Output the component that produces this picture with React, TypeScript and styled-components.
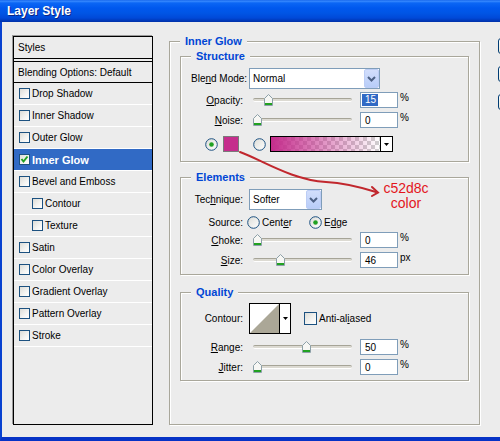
import styled, { createGlobalStyle } from 'styled-components';

const GlobalStyle = createGlobalStyle`
  html, body {
    margin: 0;
    padding: 0;
    overflow: hidden;
    background: #ececec;
  }
  body {
    font-family: 'Liberation Sans', Arial, sans-serif;
    font-size: 10px;
    color: #000;
  }
`;

const Window = styled.div`
  position: relative;
  width: 500px;
  height: 441px;
  overflow: hidden;
  display: flex;
  flex-direction: column;
  background: #ececec;
`;

const TitleBar = styled.div`
  flex: 0 0 22px;
  display: flex;
  align-items: center;
  padding-left: 7px;
  background: linear-gradient(
    #0a5ae6 0px,
    #3b8cff 1px,
    #0b66f5 3px,
    #0058ee 8px,
    #0055e5 13px,
    #0049d8 18px,
    #0036b4 21px,
    #0031a8 22px
  );
  color: #fff;
  font: bold 12px 'Liberation Sans', Arial, sans-serif;
  text-shadow: 1px 1px 0 #0c2483;
`;

const Body = styled.div`
  flex: 1;
  display: flex;
  align-items: flex-start;
  padding: 12px 0 0 10px;
  border-left: 2px solid #0841d0;
  border-bottom: 4px solid #0733c6;
  min-width: 0;
`;

/* ---------- style list on the left ---------- */

const Sidebar = styled.div`
  flex: 0 0 140px;
  box-sizing: border-box;
  height: 389px;
  margin: 2px 0 0 1px;
  border: 1px solid #000;
  box-shadow: -1px -1px 0 #9a9a9a;
  background: #ececec;
`;

const SideHeader = styled.div`
  height: 21px;
  display: flex;
  align-items: center;
  padding-left: 4px;
  border-bottom: 1px solid #000;
`;

const BlendRow = styled.div`
  height: 20px;
  margin-top: 2px;
  display: flex;
  align-items: center;
  padding-left: 4px;
  border-top: 1px solid #000;
  border-bottom: 1px solid #000;
`;

const SideItem = styled.div<{ $selected?: boolean; $indent?: boolean }>`
  height: 21px;
  display: flex;
  align-items: center;
  gap: 2px;
  padding-left: ${(p) => (p.$indent ? 18 : 5)}px;
  border-bottom: 1px solid #fff;
  background: ${(p) => (p.$selected ? '#316ac5' : 'transparent')};
  color: ${(p) => (p.$selected ? '#fff' : '#000')};
  font-weight: ${(p) => (p.$selected ? 'bold' : 'normal')};
  font-size: ${(p) => (p.$selected ? 11 : 10)}px;
`;

const Check = styled.span<{ $size: number }>`
  flex: 0 0 auto;
  box-sizing: border-box;
  width: ${(p) => p.$size}px;
  height: ${(p) => p.$size}px;
  display: inline-flex;
  align-items: center;
  justify-content: center;
  border: 1px solid #1c5180;
  background: linear-gradient(135deg, #dcdcd7 0%, #f4f4f2 60%, #ffffff 100%);
`;

/* ---------- settings panel ---------- */

const Group = styled.fieldset<{ $pt: number; $pb: number; $px: number; $mt?: number }>`
  flex: 0 0 auto;
  box-sizing: border-box;
  margin: ${(p) => p.$mt ?? 0}px 0 0;
  padding: ${(p) => p.$pt}px ${(p) => p.$px}px ${(p) => p.$pb}px;
  border: 1px solid #a9a79b;
  box-shadow: 1px 1px 0 #fff, inset 1px 1px 0 #fff;
  min-width: 0;
`;

const Legend = styled.legend`
  padding: 0 5px;
  font: bold 11px/14px 'Liberation Sans', Arial, sans-serif;
  color: #0046d5;
  background: #ececec;
`;

const Main = styled(Group)`
  width: 311px;
  flex: 0 0 311px;
  margin-left: 16px;
`;

const Row = styled.div<{ $h: number; $mt?: number }>`
  display: grid;
  grid-template-columns: 52px 1fr;
  column-gap: 6px;
  align-items: center;
  height: ${(p) => p.$h}px;
  margin-top: ${(p) => p.$mt ?? 0}px;
`;

const Label = styled.span`
  text-align: right;
  white-space: nowrap;
`;

const Controls = styled.div<{ $shift?: number }>`
  display: flex;
  align-items: center;
  height: 100%;
  margin-left: ${(p) => p.$shift ?? 0}px;
  white-space: nowrap;
`;

const Select = styled.div<{ $w: number }>`
  box-sizing: border-box;
  width: ${(p) => p.$w}px;
  height: 21px;
  display: flex;
  align-items: center;
  justify-content: space-between;
  padding: 0 0 0 3px;
  border: 1px solid #7f9db9;
  background: #fff;
`;

const SelectButton = styled.span`
  box-sizing: border-box;
  width: 15px;
  height: 19px;
  display: flex;
  align-items: center;
  justify-content: center;
  border: 1px solid #bccdf5;
  border-radius: 2px;
  background: linear-gradient(#d2defc, #b8cdf8);
`;

const Slider = styled.div`
  position: relative;
  flex: 0 0 99px;
  height: 16px;
  margin-left: 4px;
  display: flex;
  align-items: center;
`;

const Groove = styled.div`
  box-sizing: border-box;
  width: 100%;
  height: 4px;
  border-radius: 2px;
  border-top: 1px solid #a6a497;
  border-bottom: 1px solid #fff;
  background: #dcdad2;
`;

const Thumb = styled.svg<{ $pos: number }>`
  position: absolute;
  top: 2px;
  left: ${(p) => p.$pos}px;
`;

const NumberBox = styled.div`
  box-sizing: border-box;
  flex: 0 0 38px;
  height: 16px;
  margin-left: 8px;
  display: flex;
  align-items: center;
  padding-left: 4px;
  border: 1px solid #7f9db9;
  background: #fff;
`;

const Selected = styled.span`
  margin-left: -3px;
  padding: 0 2px 0 3px;
  line-height: 12px;
  background: #316ac5;
  color: #fff;
`;

const Unit = styled.span`
  margin-left: 2px;
  align-self: flex-start;
`;

const ColorRow = styled.div`
  display: flex;
  align-items: center;
  height: 16px;
  margin-top: 8px;
  padding-left: 14px;
`;

const Swatch = styled.div<{ $color: string }>`
  box-sizing: border-box;
  width: 16px;
  height: 16px;
  margin: 0 14px 0 5px;
  border: 1px solid #7a7a7a;
  background: ${(p) => p.$color};
`;

const GradientBox = styled.div`
  box-sizing: border-box;
  width: 123px;
  height: 16px;
  margin-left: 4px;
  display: flex;
  border: 1px solid #000;
  background: #fff;
`;

const GradientPreview = styled.div<{ $color: string }>`
  flex: 1;
  background:
    linear-gradient(to right, ${(p) => p.$color}, rgba(197, 45, 140, 0)),
    repeating-conic-gradient(#cfcfcf 0% 25%, #ffffff 0% 50%) 0 0 / 8px 8px;
`;

const DropArrow = styled.div<{ $divider?: boolean }>`
  flex: ${(p) => (p.$divider ? '0 0 11px' : '1')};
  display: flex;
  align-items: center;
  justify-content: center;
  border-left: ${(p) => (p.$divider ? '1px solid #000' : 'none')};
  background: #fff;
`;

const RadioText = styled.span<{ $gap: number }>`
  margin: 0 ${(p) => p.$gap}px 0 2px;
`;

const ContourBox = styled.div`
  box-sizing: border-box;
  width: 42px;
  height: 31px;
  display: flex;
  border: 1px solid #000;
  background: #fff;
`;

const ContourPreview = styled.svg`
  flex: 0 0 29px;
  border-right: 1px solid #000;
`;

const AntiAlias = styled.label`
  display: flex;
  align-items: center;
  gap: 2px;
  margin-left: 13px;
`;

/* ---------- dialog buttons, cut off at the right edge ---------- */

const ButtonColumn = styled.div`
  flex: 0 0 80px;
  display: flex;
  flex-direction: column;
  gap: 12px;
  margin: 4px 0 0 18px;
`;

const DialogButton = styled.div`
  box-sizing: border-box;
  height: 16px;
  border: 1px solid #003c74;
  border-radius: 3px;
  background: linear-gradient(#ffffff, #ece9d8);
`;

/* ---------- red note drawn on top ---------- */

const Overlay = styled.svg`
  position: absolute;
  left: 0;
  top: 0;
  pointer-events: none;
`;

const Note = styled.div`
  position: absolute;
  left: 382px;
  top: 181px;
  width: 48px;
  text-align: center;
  font: 14px/15px 'Liberation Sans', Arial, sans-serif;
  color: #e3161d;
`;

function Chevron() {
  return (
    <svg width="9" height="6" viewBox="0 0 9 6">
      <path d="M1 1 L4.5 4.5 L8 1" fill="none" stroke="#4d6185" strokeWidth="2" />
    </svg>
  );
}

function TickMark({ color }: { color: string }) {
  return (
    <svg width="9" height="9" viewBox="0 0 9 9">
      <path d="M1.5 4 L3.5 6.5 L7.5 1.5" fill="none" stroke={color} strokeWidth="2" />
    </svg>
  );
}

function Radio({ on }: { on?: boolean }) {
  return (
    <svg width="13" height="13" viewBox="0 0 13 13" style={{ flex: '0 0 13px' }}>
      <defs>
        <linearGradient id="radioFill" x1="0" y1="0" x2="1" y2="1">
          <stop offset="0" stopColor="#dcdcd7" />
          <stop offset="1" stopColor="#ffffff" />
        </linearGradient>
      </defs>
      <circle cx="6.5" cy="6.5" r="5.8" fill="url(#radioFill)" stroke="#1c5180" strokeWidth="1" />
      {on && <circle cx="6.5" cy="6.5" r="2.3" fill="#21a121" />}
    </svg>
  );
}

function SliderThumb({ pos }: { pos: number }) {
  return (
    <Thumb $pos={pos} width="9" height="12" viewBox="0 0 9 12">
      <path d="M0.5 4.5 L4.5 0.5 L8.5 4.5 V11.5 H0.5 Z" fill="#f7f7f4" stroke="#8da0a8" />
      <rect x="1" y="9" width="7" height="2" fill="#21a121" />
    </Thumb>
  );
}

function SmallArrow() {
  return (
    <svg width="5" height="3" viewBox="0 0 5 3">
      <path d="M0 0 H5 L2.5 3 Z" fill="#000" />
    </svg>
  );
}

interface SliderRowProps {
  label: React.ReactNode;
  value: string;
  unit: string;
  pos: number;
  mt: number;
  selected?: boolean;
}

function SliderRow({ label, value, unit, pos, mt, selected }: SliderRowProps) {
  return (
    <Row $h={16} $mt={mt}>
      <Label>{label}</Label>
      <Controls>
        <Slider>
          <Groove />
          <SliderThumb pos={pos} />
        </Slider>
        <NumberBox>{selected ? <Selected>{value}</Selected> : value}</NumberBox>
        <Unit>{unit}</Unit>
      </Controls>
    </Row>
  );
}

const styleItems = [
  { label: 'Drop Shadow' },
  { label: 'Inner Shadow' },
  { label: 'Outer Glow' },
  { label: 'Inner Glow', checked: true, selected: true },
  { label: 'Bevel and Emboss' },
  { label: 'Contour', indent: true },
  { label: 'Texture', indent: true },
  { label: 'Satin' },
  { label: 'Color Overlay' },
  { label: 'Gradient Overlay' },
  { label: 'Pattern Overlay' },
  { label: 'Stroke' },
];

const glowColor = '#c52d8c';

export default function App() {
  return (
    <Window>
      <GlobalStyle />
      <TitleBar>Layer Style</TitleBar>
      <Body>
        <Sidebar>
          <SideHeader>Styles</SideHeader>
          <BlendRow>Blending Options: Default</BlendRow>
          {styleItems.map((item) => (
            <SideItem key={item.label} $selected={item.selected} $indent={item.indent}>
              <Check $size={11}>{item.checked && <TickMark color="#21a121" />}</Check>
              {item.label}
            </SideItem>
          ))}
        </Sidebar>

        <Main $pt={1} $pb={43} $px={10}>
          <Legend>Inner Glow</Legend>

          <Group $pt={5} $pb={9} $px={10}>
            <Legend>Structure</Legend>
            <Row $h={21}>
              <Label>
                Ble<u>n</u>d Mode:
              </Label>
              <Controls>
                <Select $w={131}>
                  Normal
                  <SelectButton>
                    <Chevron />
                  </SelectButton>
                </Select>
              </Controls>
            </Row>
            <SliderRow label={<><u>O</u>pacity:</>} value="15" unit="%" pos={11} mt={3} selected />
            <SliderRow label={<><u>N</u>oise:</>} value="0" unit="%" pos={0} mt={4} />
            <ColorRow>
              <Radio on />
              <Swatch $color={glowColor} />
              <Radio />
              <GradientBox>
                <GradientPreview $color={glowColor} />
                <DropArrow $divider>
                  <SmallArrow />
                </DropArrow>
              </GradientBox>
            </ColorRow>
          </Group>

          <Group $pt={5} $pb={6} $px={10} $mt={8}>
            <Legend>Elements</Legend>
            <Row $h={21}>
              <Label>
                Tec<u>h</u>nique:
              </Label>
              <Controls>
                <Select $w={73}>
                  Softer
                  <SelectButton>
                    <Chevron />
                  </SelectButton>
                </Select>
              </Controls>
            </Row>
            <Row $h={18} $mt={3}>
              <Label>Source:</Label>
              <Controls $shift={-2}>
                <Radio />
                <RadioText $gap={17}>
                  Cent<u>e</u>r
                </RadioText>
                <Radio on />
                <RadioText $gap={0}>
                  E<u>d</u>ge
                </RadioText>
              </Controls>
            </Row>
            <SliderRow label={<><u>C</u>hoke:</>} value="0" unit="%" pos={0} mt={1} />
            <SliderRow label={<><u>S</u>ize:</>} value="46" unit="px" pos={23} mt={4} />
          </Group>

          <Group $pt={4} $pb={5} $px={10} $mt={10}>
            <Legend>Quality</Legend>
            <Row $h={31}>
              <Label>Contour:</Label>
              <Controls>
                <ContourBox>
                  <ContourPreview width="29" height="29" viewBox="0 0 29 29">
                    <polygon points="0,29 29,0 29,29" fill="#aba797" />
                  </ContourPreview>
                  <DropArrow>
                    <SmallArrow />
                  </DropArrow>
                </ContourBox>
                <AntiAlias>
                  <Check $size={13} />
                  <span>
                    Anti-al<u>i</u>ased
                  </span>
                </AntiAlias>
              </Controls>
            </Row>
            <SliderRow label={<><u>R</u>ange:</>} value="50" unit="%" pos={49} mt={5} />
            <SliderRow label={<><u>J</u>itter:</>} value="0" unit="%" pos={0} mt={4} />
          </Group>
        </Main>

        <ButtonColumn>
          <DialogButton />
          <DialogButton />
          <DialogButton />
        </ButtonColumn>
      </Body>

      <Overlay width="500" height="441" viewBox="0 0 500 441">
        <path
          d="M240 152 C262 160 292 180 326 182 C346 183 360 187 376 192"
          fill="none"
          stroke="#c1272d"
          strokeWidth="2"
          strokeLinecap="round"
        />
        <path d="M372 187 L378 192.5 L372 196" fill="none" stroke="#c1272d" strokeWidth="2" strokeLinecap="round" />
      </Overlay>
      <Note>
        c52d8c
        <br />
        color
      </Note>
    </Window>
  );
}
